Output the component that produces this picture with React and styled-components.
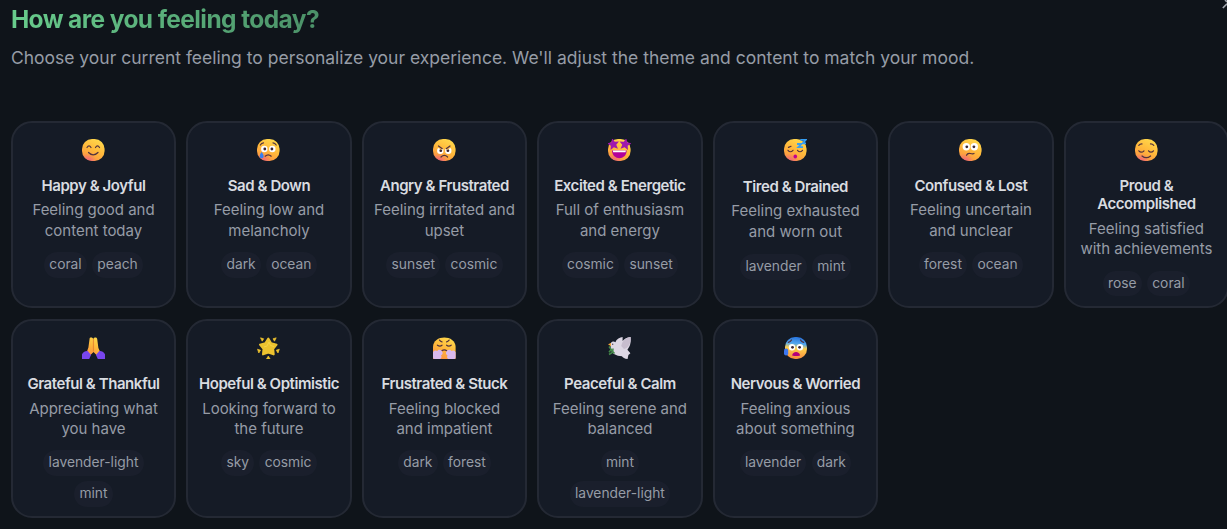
import React from "react";
import styled, { createGlobalStyle } from "styled-components";

const GlobalStyle = createGlobalStyle`
  * { box-sizing: border-box; }
  html, body { margin: 0; background: #0f141a; }
  body { font-family: Inter, "Liberation Sans", sans-serif; overflow: hidden; }
  h1, h2, p { margin: 0; }
`;

const Page = styled.main`
  position: relative;
  width: 1227px;
  height: 529px;
  overflow: hidden;
  padding: 4px 0 0 10.9px;
  background: #0f141a;
`;

const CloseIcon = styled.svg`
  position: absolute;
  top: 0;
  right: 0;
`;

const Heading = styled.h1`
  width: max-content;
  font-size: 24.5px;
  line-height: 31px;
  font-weight: 700;
  letter-spacing: -0.6px;
  color: transparent;
  background: linear-gradient(90deg, #68cc8c, #4b9168);
  background-clip: text;
  -webkit-background-clip: text;
`;

const Subtitle = styled.p`
  margin-top: 9px;
  font-size: 17.5px;
  line-height: 28px;
  white-space: nowrap;
  color: #969ca6;
`;

const Grid = styled.section`
  display: grid;
  grid-template-columns: repeat(7, 165.2px);
  grid-template-rows: 187.7px 199px;
  gap: 10.5px 10.3px;
  margin-top: 48.7px;
`;

const Card = styled.article`
  display: flex;
  flex-direction: column;
  align-items: center;
  padding: 16px 9.8px 8px;
  border: 2px solid #242934;
  border-radius: 21px;
  background: #151b26;
  text-align: center;
`;

const Emoji = styled.svg`
  display: block;
  flex: none;
  width: 23px;
  height: 22px;
`;

const Title = styled.h2`
  margin-top: ${(p) => (p.$lowered ? "17px" : "16px")};
  font-size: 15px;
  line-height: 18.4px;
  font-weight: 600;
  letter-spacing: -0.44px;
  color: #d9dce0;
`;

const Description = styled.p`
  margin-top: 5.3px;
  font-size: 15px;
  line-height: 20.5px;
  letter-spacing: -0.01px;
  color: #969ca6;
`;

const Tags = styled.div`
  display: flex;
  flex-wrap: wrap;
  justify-content: center;
  gap: 5.2px;
  margin-top: ${(p) => (p.$lowered ? "11.6px" : "10.8px")};
`;

const Tag = styled.span`
  padding: 0 5.2px;
  border-radius: 13px;
  background: #1a1f2c;
  font-size: 13.8px;
  line-height: 25.8px;
  color: #969ca6;
`;

const ink = { fill: "none", stroke: "#52323f", strokeWidth: 1.2, strokeLinecap: "round" };

const Face = ({ children }) => (
  <>
    <rect width="22.6" height="22" rx="10" fill="url(#skin)" />
    <rect width="22.6" height="22" rx="10" fill="url(#blush)" />
    {children}
  </>
);

const Eyes = ({ y = 10, r = 3.2 }) => (
  <>
    <circle cx="7.3" cy={y} r={r} fill="#fff" />
    <circle cx="15.3" cy={y} r={r} fill="#fff" />
    <circle cx="7.8" cy={y} r="1.4" fill="#3c2630" />
    <circle cx="14.9" cy={y} r="1.4" fill="#3c2630" />
  </>
);

const star = "M0-4.7 1.4-1.5 4.8-1.2 2.2 1.1 3 4.4 0 2.7-3 4.4-2.2 1.1-4.8-1.2-1.4-1.5Z";

const drawings = {
  happy: (
    <Face>
      <path {...ink} d="M5 8.5Q7 5.2 9 8.5M13.5 8.5Q15.5 5.2 17.5 8.5M6.5 13.5Q11.2 18.2 16 13.5" />
    </Face>
  ),
  sad: (
    <Face>
      <Eyes />
      <path {...ink} d="M3.3 6Q4.5 4 6.5 3.9M16 3.9Q18 4 19.2 6M8.2 17.2Q11.2 14.5 14.2 17.2" />
      <path d="M4.7 13C3 15 2.7 16 2.8 17.5C3 20 6.5 20 6.6 17.3C6.6 15.8 5.8 14.5 4.7 13Z" fill="#357ef2" />
    </Face>
  ),
  angry: (
    <Face>
      <Eyes y={11.7} />
      <path d="M3.5 8 9 11 10 8ZM19.2 8 13.7 11 12.7 8Z" fill="#ffb83b" />
      <path {...ink} d="M5.5 7 9.3 9.7M17 7 13.2 9.7M8 18Q11.3 14.8 14.6 18" />
    </Face>
  ),
  excited: (
    <Face>
      <path d="M4 11.5H18.7C18.4 21.7 4.3 21.7 4 11.5Z" fill="#b4009a" />
      <path d="M4.8 11.5H17.9L17.5 13.2H5.2Z" fill="#fff" />
      <path d={star} transform="translate(5.3 4.9) rotate(-10) scale(1.25)" fill="#a019ae" />
      <path d={star} transform="translate(17.2 4.9) rotate(10) scale(1.25)" fill="#a019ae" />
    </Face>
  ),
  tired: (
    <Face>
      <path {...ink} d="M4 11.3Q6.3 14.2 9 11.3M13.5 11.3Q16 14.2 18.5 11.3M4.5 8.4 7 7.3" />
      <ellipse cx="11.3" cy="17.5" rx="1.8" ry="2" fill="#c3008f" />
      <path d="M16.3.8H21.8L18.6 4.4H22M13 5H17.5L14.4 8.2H19" fill="none" stroke="#379ff2" strokeWidth="1.8" />
    </Face>
  ),
  confused: (
    <Face>
      <Eyes y={7.8} r={3.7} />
      <path {...ink} d="M7.5 16.3Q8.5 13.8 11.3 14.5T15 14.5" />
    </Face>
  ),
  proud: (
    <Face>
      <path {...ink} d="M3.8 11.8Q6.3 14.5 9 11.8M13.5 11.8Q16 14.5 18.5 11.8M3.8 6.4Q5 4.8 7 4.9M15.5 4.9Q17.5 4.8 18.8 6.4M7 17Q11.3 20.4 15.6 17" />
    </Face>
  ),
  grateful: (
    <>
      <path d="M7.7.9C9 0 10.9.5 11.4 2C12 .3 14.6 0 15.2 2L16.4 11 18.4 15.4 15 18.6 11.5 15 8 18.6 4.6 15.4 6.4 10.5Z" fill="url(#skin)" />
      <path d="M11.4 2V14.5" stroke="#df792d" strokeWidth=".8" />
      <path d="M0 17.2C1.5 14.8 3.5 13.7 5.7 14L9 18 7.2 22H0ZM23 17.2C21.5 14.8 19.5 13.7 17.3 14L14 18 15.8 22H23Z" fill="#7845ee" />
    </>
  ),
  hopeful: (
    <g fill="#ecc22f">
      <path d="M11.3 1.6 14 6.1 19.6 7.6 16.2 11.8 16.7 17.4 11.3 15.6 6 17.4 6.5 11.8 3 7.6 8.5 6.1Z" stroke="#ecc22f" strokeWidth="2" strokeLinejoin="round" />
      <path d="M3.5.8 6.7 1.8 5.2 4.2ZM19.2.8 16 1.8 17.5 4.2ZM.5 12.2 3.6 13.2 1.8 16ZM22.3 12.2 19.2 13.2 21 16ZM11.3 19 13.1 22H9.5Z" stroke="#ecc22f" strokeWidth=".7" strokeLinejoin="round" />
      <path d="M7 10 10 9 12 5 13.5 8.5 17 9.5" fill="none" stroke="#f4d347" strokeWidth="1" />
    </g>
  ),
  frustrated: (
    <>
      <path d="M0 22V10C0-2.8 22.6-2.8 22.6 10V22Z" fill="url(#skin)" />
      <path {...ink} d="M4.4 8.2Q7 9.9 9 8.2M13.6 8.2Q15.7 9.9 18.2 8.2M6.5 3.1Q7.5 4.6 9 4.8M16.1 3.1Q15 4.6 13.6 4.8M8.8 13.8Q11.3 11.8 13.8 13.8" />
      <path d="M8.8 14C7 12 4.8 13 4.4 14C1.8 12.5 0 14 0 15.6V20.5Q0 22 2 22H6.2C8.6 22 9 19.8 8 18.5C10 17.5 10.2 15.5 8.8 14ZM13.8 14C15.6 12 17.8 13 18.2 14C20.8 12.5 22.6 14 22.6 15.6V20.5Q22.6 22 20.6 22H16.4C14 22 13.6 19.8 14.6 18.5C12.6 17.5 12.4 15.5 13.8 14Z" fill="#d9b9ed" />
    </>
  ),
  peaceful: (
    <>
      <path d="M2.6 6.4C3.8 4.4 5.8 4.2 7.5 5.2C8.5 2 12 .2 14.6 0V4C16.5 1.8 19 .2 22.6 0C23.2 7 21.6 10 19.4 12.7L22.4 16.2 20.4 18 19.6 22C16.5 21.8 15 20.5 13.9 19.2C8.5 19 3.3 17 2.6 11Z" fill="#ddd7e4" />
      <path d="M13.2 9C14.5 3.5 18 .5 22.6 0C23 7 20.2 11 16 12" fill="#c7bdce" />
      <path d="M0 7.2 3 5.9V9.3Z" fill="#f7a83b" />
      <circle cx="4.7" cy="7.3" r=".7" fill="#50404e" />
      <path d="M1 9.5 3.2 12.5 1 15.3M3 12.5 6.5 16.4M5 11.5 4.7 15M1 17.5 5 15" fill="none" stroke="#438849" strokeWidth="1.5" />
    </>
  ),
  nervous: (
    <>
      <rect x="1" width="22" height="22" rx="10" fill="url(#fear)" />
      <g transform="translate(.7 0)">
        <Eyes y={10.3} />
        <path {...ink} d="M3.6 5.3Q5.8 4.8 6.8 3M19 5.3Q16.8 4.8 15.8 3" />
        <path d="M7.4 18.5C7.8 13.7 14.9 13.7 15.4 18.5Q11.5 19.5 7.4 18.5Z" fill="#b60079" />
      </g>
      <rect y="11.5" width="4.2" height="7" rx="2" fill="#3c76ef" />
    </>
  ),
};

const moods = [
  ["happy", "Happy & Joyful", "Feeling good and content today", ["coral", "peach"]],
  ["sad", "Sad & Down", "Feeling low and melancholy", ["dark", "ocean"]],
  ["angry", "Angry & Frustrated", "Feeling irritated and upset", ["sunset", "cosmic"]],
  ["excited", "Excited & Energetic", "Full of enthusiasm and energy", ["cosmic", "sunset"]],
  ["tired", "Tired & Drained", "Feeling exhausted and worn out", ["lavender", "mint"]],
  ["confused", "Confused & Lost", "Feeling uncertain and unclear", ["forest", "ocean"]],
  ["proud", "Proud & Accomplished", "Feeling satisfied with achievements", ["rose", "coral"]],
  ["grateful", "Grateful & Thankful", "Appreciating what you have", ["lavender-light", "mint"]],
  ["hopeful", "Hopeful & Optimistic", "Looking forward to the future", ["sky", "cosmic"]],
  ["frustrated", "Frustrated & Stuck", "Feeling blocked and impatient", ["dark", "forest"]],
  ["peaceful", "Peaceful & Calm", "Feeling serene and balanced", ["mint", "lavender-light"]],
  ["nervous", "Nervous & Worried", "Feeling anxious about something", ["lavender", "dark"]],
];

const Gradients = () => (
  <svg width="0" height="0" aria-hidden="true" display="block">
    <defs>
      <linearGradient id="skin" x1=".75" y1="0" x2=".25" y2="1">
        <stop offset="0" stopColor="#ffda4c" />
        <stop offset=".5" stopColor="#ffb83b" />
        <stop offset="1" stopColor="#fb9143" />
      </linearGradient>
      <radialGradient id="blush" cx=".25" cy="1.05" r=".4">
        <stop offset="0" stopColor="#ef5b88" />
        <stop offset="1" stopColor="#ef5b88" stopOpacity="0" />
      </radialGradient>
      <linearGradient id="fear" x1=".5" y1="0" x2=".4" y2="1">
        <stop offset="0" stopColor="#2773df" />
        <stop offset=".3" stopColor="#54a8ed" />
        <stop offset=".5" stopColor="#ffd04a" />
        <stop offset="1" stopColor="#f8893f" />
      </linearGradient>
    </defs>
  </svg>
);

export default function App() {
  return (
    <>
      <GlobalStyle />
      <Page>
        <Heading>How are you feeling today?</Heading>
        <Subtitle>
          Choose your current feeling to personalize your experience. We'll adjust the theme and content to match your mood.
        </Subtitle>
        <Grid>
          {moods.map(([id, title, description, tags]) => (
            <Card key={id}>
              <Emoji viewBox="0 0 23 22">{drawings[id]}</Emoji>
              <Title $lowered={id === "tired"}>{title}</Title>
              <Description>{description}</Description>
              <Tags $lowered={id === "tired"}>
                {tags.map((tag) => (
                  <Tag key={tag}>{tag}</Tag>
                ))}
              </Tags>
            </Card>
          ))}
        </Grid>
        <CloseIcon width="5" height="10" viewBox="0 0 5 10">
          <path d="M.8 8 5 3.8M3 0 5 2" stroke="#a3a8b0" strokeWidth="1.6" fill="none" />
        </CloseIcon>
        <Gradients />
      </Page>
    </>
  );
}
